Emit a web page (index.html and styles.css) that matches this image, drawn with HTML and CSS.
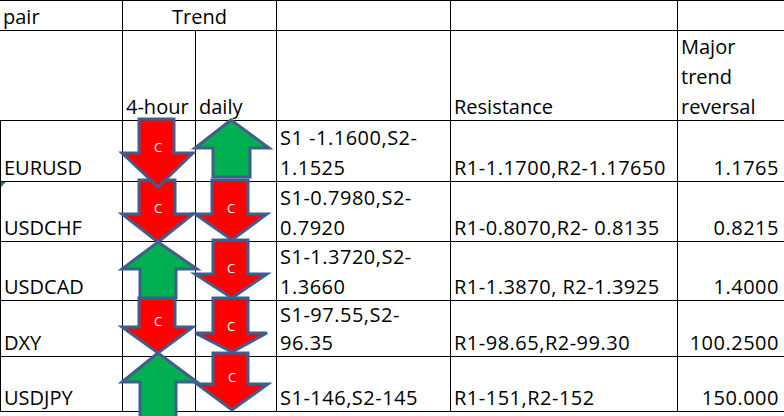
FILE: index.html
```html
<!DOCTYPE html>
<html>
<head>
<meta charset="utf-8">
<link rel="stylesheet" href="styles.css">
</head>
<body>
<div class="sheet">
  <div class="grid">
    <div class="c"><span>pair</span></div>
    <div class="c trend"><span>Trend</span></div>
    <div class="c"></div>
    <div class="c"></div>
    <div class="c"></div>

    <div class="c"></div>
    <div class="c"><span>4-hour</span></div>
    <div class="c"><span>daily</span></div>
    <div class="c"></div>
    <div class="c"><span>Resistance</span></div>
    <div class="c"><span>Major<br>trend<br>reversal</span></div>

    <div class="c first"><span>EURUSD</span></div>
    <div class="c"></div>
    <div class="c"></div>
    <div class="c n"><span>S1 -1.1600,S2-<br>1.1525</span></div>
    <div class="c n"><span>R1-1.1700,R2-1.17650</span></div>
    <div class="c n num"><span>1.1765</span></div>

    <div class="c first flag"><span>USDCHF</span></div>
    <div class="c"></div>
    <div class="c"></div>
    <div class="c n"><span>S1-0.7980,S2-<br>0.7920</span></div>
    <div class="c n"><span>R1-0.8070,R2- 0.8135</span></div>
    <div class="c n num"><span>0.8215</span></div>

    <div class="c first"><span>USDCAD</span></div>
    <div class="c"></div>
    <div class="c"></div>
    <div class="c n"><span>S1-1.3720,S2-<br>1.3660</span></div>
    <div class="c n"><span>R1-1.3870, R2-1.3925</span></div>
    <div class="c n num"><span>1.4000</span></div>

    <div class="c first"><span>DXY</span></div>
    <div class="c"></div>
    <div class="c"></div>
    <div class="c n tight"><span>S1-97.55,S2-<br>96.35</span></div>
    <div class="c n"><span>R1-98.65,R2-99.30</span></div>
    <div class="c n num"><span>100.2500</span></div>

    <div class="c first"><span>USDJPY</span></div>
    <div class="c"></div>
    <div class="c"></div>
    <div class="c n"><span>S1-146,S2-145</span></div>
    <div class="c n"><span>R1-151,R2-152</span></div>
    <div class="c n num"><span>150.000</span></div>
  </div>

  <svg class="arrows" width="784" height="416" viewBox="0 0 784 416">
    <g class="arrow up">
      <path d="M158 353 L197 382 H176 V425 H140 V382 H122 Z"/>
    </g>
    <g class="arrow down">
      <path d="M213 353 H248 V384 H268 L232 410 L197 384 H213 Z"/>
      <text x="232" y="377">C</text>
    </g>
    <g class="arrow down">
      <path d="M213 298 H248 V333 H267 L232 352 L195 333 H213 Z"/>
      <text x="231" y="326">C</text>
    </g>
    <g class="arrow down">
      <path d="M139 298 H175 V327 H193 L158 353 L122 327 H139 Z"/>
      <text x="158" y="321">C</text>
    </g>
    <g class="arrow down">
      <path d="M213 240 H248 V274 H267 L232 298 L195 274 H213 Z"/>
      <text x="231" y="268">C</text>
    </g>
    <g class="arrow up">
      <path d="M158 242 L197 269 H176 V298 H140 V269 H122 Z"/>
    </g>
    <g class="arrow down">
      <path d="M212 180 H248 V214 H267 L232 240 L195 214 H212 Z"/>
      <text x="231" y="208">C</text>
    </g>
    <g class="arrow down">
      <path d="M139 180 H175 V214 H193 L158 242 L122 214 H139 Z"/>
      <text x="158" y="208">C</text>
    </g>
    <g class="arrow up">
      <path d="M231 120 L269 148 H250 V177 H213 V148 H195 Z"/>
    </g>
    <g class="arrow down">
      <path d="M139 119 H174 V153 H193 L158 187 L122 153 H139 Z"/>
      <text x="158" y="147">C</text>
    </g>
  </svg>
</div>
</body>
</html>
```

FILE: styles.css
```css
html, body {
  margin: 0;
  padding: 0;
  background: #ffffff;
}

.sheet {
  position: relative;
  width: 784px;
  height: 416px;
  overflow: hidden;
  background: #ffffff;
  font-family: "Open Sans", "Noto Sans", sans-serif;
  font-size: 20px;
  color: #000000;
}

.grid {
  display: grid;
  grid-template-columns: 122px 72px 80px 173px 226px 106px;
  grid-template-rows: 29px 89px 60px 59px 58px 55px 54px;
  gap: 1px;
  padding: 1px 0;
  background: #000000;
  width: 784px;
}

.c {
  position: relative;
  background: #ffffff;
  display: flex;
  flex-direction: column;
  justify-content: flex-end;
  overflow: hidden;
  padding: 0 3px;
  line-height: 30px;
  white-space: nowrap;
}

.c > span {
  margin-bottom: -2px;
}

.tight {
  overflow: visible;
}

.tight > span {
  line-height: 28px;
  margin-bottom: -1px;
}

.n {
  letter-spacing: 0.5px;
}

.trend {
  grid-column: span 2;
  align-items: center;
}

.first {
  box-shadow: inset 1px 0 0 #000000;
  padding-left: 4px;
}

.num {
  align-items: flex-end;
  padding-right: 5px;
}

.flag::before {
  content: "";
  position: absolute;
  left: 1px;
  top: 0;
  width: 0;
  height: 0;
  border-top: 5px solid #1f8a3a;
  border-right: 5px solid transparent;
}

.arrows {
  position: absolute;
  left: 0;
  top: 0;
  pointer-events: none;
}

.arrow path {
  stroke: #3e5f8d;
  stroke-width: 3;
  stroke-linejoin: miter;
}

.arrow.down path {
  fill: #ff0000;
}

.arrow.up path {
  fill: #00b050;
}

.arrow text {
  fill: #ffffff;
  font-family: "Open Sans", sans-serif;
  font-size: 13px;
  text-anchor: middle;
  dominant-baseline: central;
}
```
